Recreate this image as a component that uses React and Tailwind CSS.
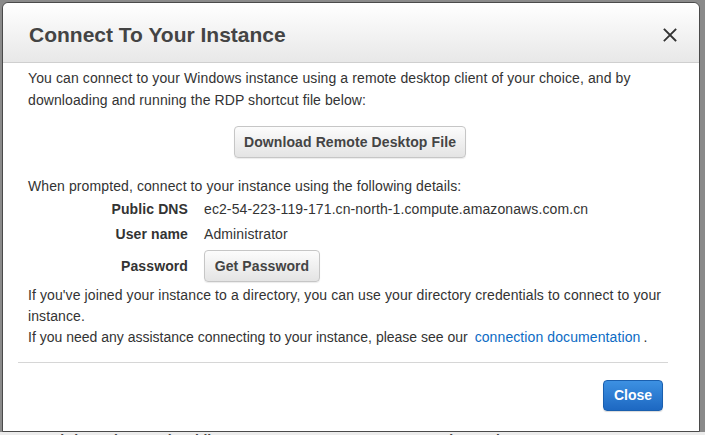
import React from 'react';

const font = { fontFamily: '"Liberation Sans", Arial, Helvetica, sans-serif' };

const App = () => {
  return (
    <div className="w-[705px] h-[435px] bg-[#8a8a8a] overflow-hidden flex flex-col" style={font}>
      {/* Modal */}
      <div className="h-[432px] shrink-0 pt-[2px] pl-[2px] pr-[5px]">
        <div className="h-[430px] bg-white border border-[#4a4a4a] rounded-t-[6px] flex flex-col overflow-hidden">
          {/* Header */}
          <div className="h-[60px] shrink-0 flex items-center justify-between pl-[26px] pr-[21px] bg-gradient-to-b from-white to-[#e8e8e8] border-b border-[#cfcfcf] rounded-t-[6px]">
            <h1 className="text-[21px] font-bold text-[#444] tracking-[0px] pt-[5px]">Connect To Your Instance</h1>
            <button className="w-[16px] h-[16px] flex items-center justify-center mt-[4px]">
              <svg width="14" height="14" viewBox="0 0 14 14">
                <path d="M1.5 1.5 L12.5 12.5 M12.5 1.5 L1.5 12.5" stroke="#333" strokeWidth="1.8" strokeLinecap="square" />
              </svg>
            </button>
          </div>

          {/* Body */}
          <div className="flex flex-col pl-[25px] pr-[20px] pt-[4px] text-[14px] text-[#333] tracking-[0.1px]">
            <p className="leading-[22px]">
              You can connect to your Windows instance using a remote desktop client of your choice, and by downloading and running the RDP shortcut file below:
            </p>

            <div className="flex justify-center mt-[15px] pr-[7px]">
              <button className="h-[32px] w-[232px] rounded-[4px] border border-[#c6c6c6] bg-gradient-to-b from-[#fcfcfc] to-[#e4e4e4] text-[14px] font-bold text-[#444] shadow-[0_1px_1px_rgba(0,0,0,0.08)]">
                Download Remote Desktop File
              </button>
            </div>

            <p className="leading-[22px] mt-[17px]">When prompted, connect to your instance using the following details:</p>

            <div className="grid grid-cols-[160px_1fr] gap-x-[16px]">
              <div className="h-[25px] flex items-center justify-end font-bold text-[#333]">Public DNS</div>
              <div className="h-[25px] flex items-center">ec2-54-223-119-171.cn-north-1.compute.amazonaws.com.cn</div>
              <div className="h-[25px] flex items-center justify-end font-bold text-[#333]">User name</div>
              <div className="h-[25px] flex items-center">Administrator</div>
              <div className="h-[38px] py-[3px] flex items-center justify-end font-bold text-[#333]">Password</div>
              <div className="h-[38px] py-[3px] flex items-center">
                <button className="h-[32px] w-[116px] rounded-[4px] border border-[#c6c6c6] bg-gradient-to-b from-[#fcfcfc] to-[#e4e4e4] text-[14px] font-bold text-[#444] shadow-[0_1px_1px_rgba(0,0,0,0.08)]">
                  Get Password
                </button>
              </div>
            </div>

            <p className="leading-[21px]">
              If you've joined your instance to a directory, you can use your directory credentials to connect to your instance.
            </p>
            <p className="leading-[21px] tracking-[0px]">
              If you need any assistance connecting to your instance, please see our{' '}
              <a href="#" className="text-[#0c6bc4] tracking-[0.1px] ml-[3px] mr-[3px]">connection documentation</a>.
            </p>
          </div>

          {/* Divider */}
          <div className="mt-[14px] ml-[15px] mr-[31px] border-t border-[#d6d6d6]" />

          {/* Footer */}
          <div className="flex justify-end pr-[36px] mt-[17px]">
            <button className="h-[31px] w-[60px] rounded-[4px] border border-[#1a5fae] bg-gradient-to-b from-[#3d91e2] to-[#1d68c2] text-[14px] font-bold text-white shadow-[0_1px_1px_rgba(0,0,0,0.15)]">
              Close
            </button>
          </div>
        </div>
      </div>

      {/* Page behind the modal */}
      <div className="h-[3px] shrink-0 bg-[#ececec] overflow-hidden">
        <div className="pl-[44px] text-[14px] font-bold text-[#444] leading-[14px] mt-[1px] whitespace-nowrap">
          Lab (1.0.0 (RMTS...)      Public DNS   ec2-54-223-119-171   compute.internal
        </div>
      </div>
    </div>
  );
};

export default App;
